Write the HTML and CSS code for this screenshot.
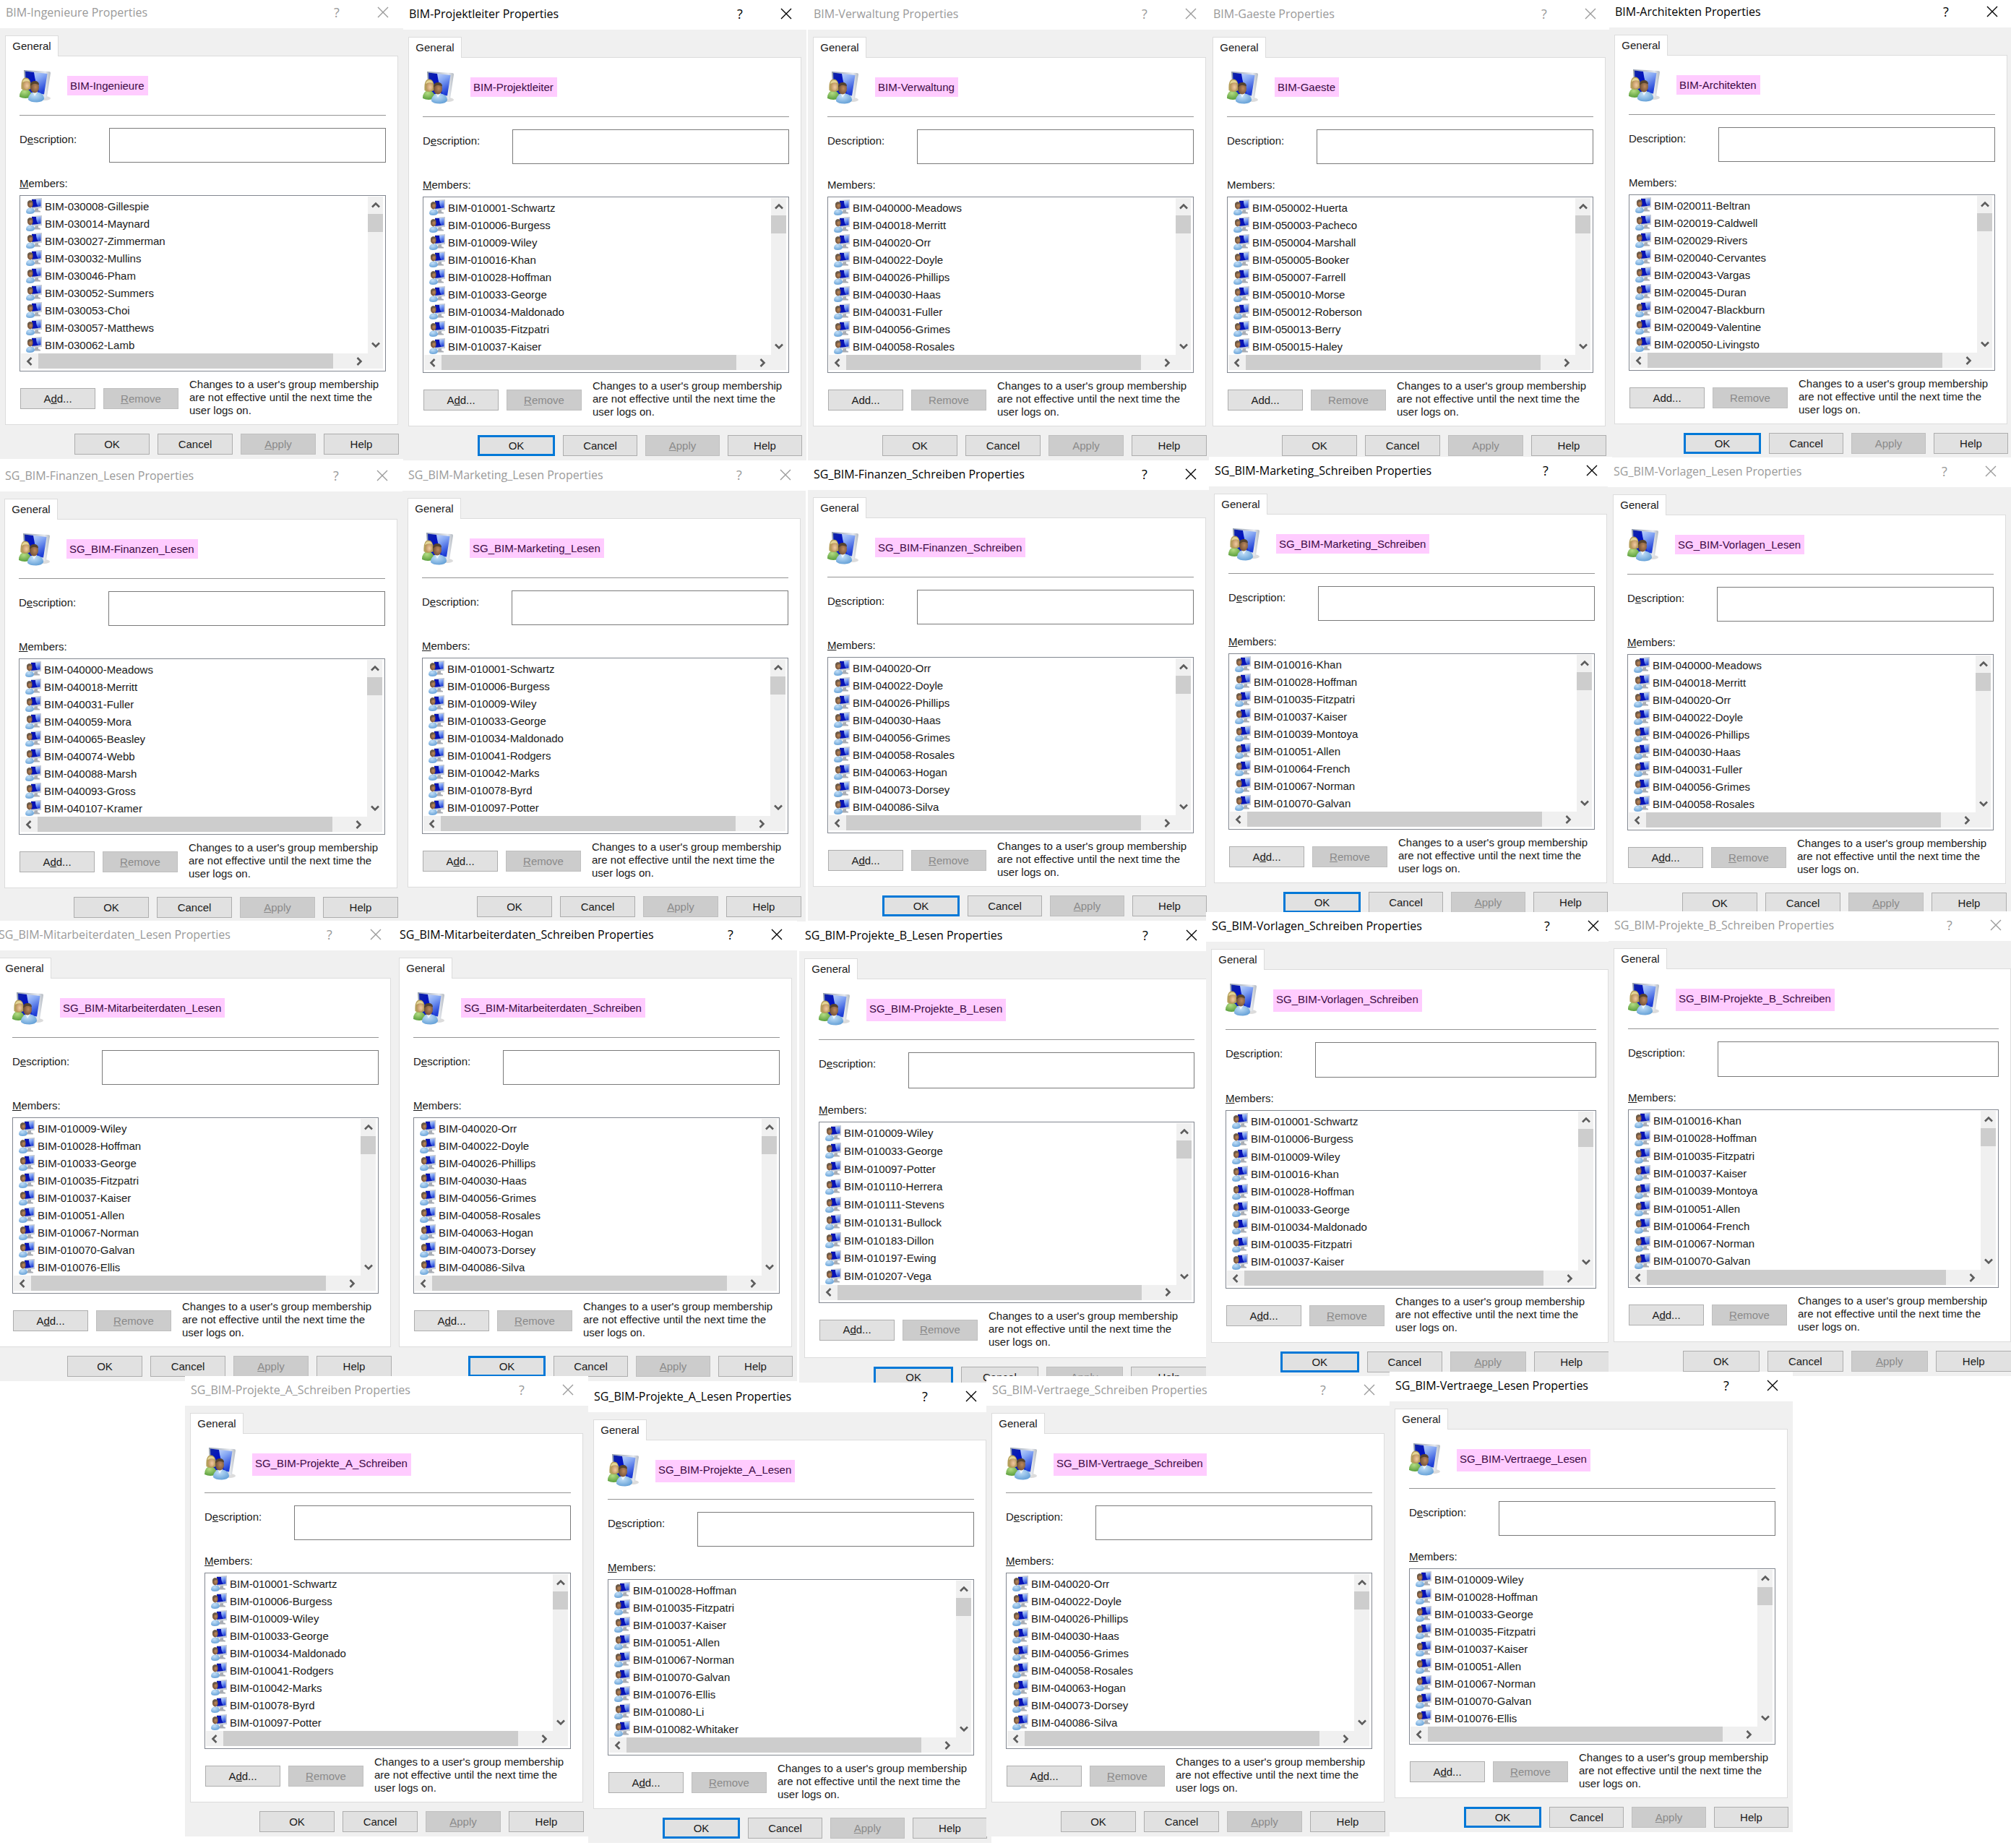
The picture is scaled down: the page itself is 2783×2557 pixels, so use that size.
FILE: index.html
```html
<!DOCTYPE html>
<html lang="en">
<head>
  <meta charset="utf-8">
  <title>Group Properties</title>
  <link rel="stylesheet" href="styles.css">
</head>
<body>
  <svg class="sprites" aria-hidden="true">
    <defs>
      <linearGradient id="screen-light" x1="0" y1="0" x2="0.6" y2="1">
        <stop offset="0" stop-color="#e4eeff"/>
        <stop offset="0.5" stop-color="#86a8f4"/>
        <stop offset="1" stop-color="#1f3fd6"/>
      </linearGradient>
      <linearGradient id="screen-dark" x1="0" y1="0" x2="1" y2="1">
        <stop offset="0" stop-color="#1226a4"/>
        <stop offset="0.5" stop-color="#0010c4"/>
        <stop offset="1" stop-color="#1a36d8"/>
      </linearGradient>
      <linearGradient id="bezel" x1="0" y1="0" x2="1" y2="0">
        <stop offset="0" stop-color="#8d99ab"/>
        <stop offset="0.8" stop-color="#e6e9ee"/>
        <stop offset="1" stop-color="#b4bac2"/>
      </linearGradient>
      <radialGradient id="shirt-blue" cx="0.4" cy="0.3" r="0.8">
        <stop offset="0" stop-color="#c3e0f8"/>
        <stop offset="1" stop-color="#5b9ad4"/>
      </radialGradient>
      <radialGradient id="shirt-green" cx="0.4" cy="0.3" r="0.8">
        <stop offset="0" stop-color="#b4dc84"/>
        <stop offset="1" stop-color="#4c9631"/>
      </radialGradient>
      <radialGradient id="face-dark" cx="0.6" cy="0.5" r="0.7">
        <stop offset="0" stop-color="#bd8a5e"/>
        <stop offset="1" stop-color="#5f432e"/>
      </radialGradient>
      <radialGradient id="face-light" cx="0.6" cy="0.6" r="0.7">
        <stop offset="0" stop-color="#f0c9a0"/>
        <stop offset="1" stop-color="#b58e55"/>
      </radialGradient>
    </defs>
    <symbol id="icon-group" viewBox="0 0 44 46">
      <ellipse cx="35" cy="40" rx="8" ry="3" fill="#dcdcdc"/>
      <path d="M6 1 L41 3 Q43 3 43 5 L38 38 Q37 40 35 39 L8 34 Z" fill="url(#bezel)"/>
      <path d="M8 2.500 L38.500 6 L34 34.500 L9 31 Z" fill="url(#screen-light)"/>
      <path d="M8 2.500 L20 4 Q22 20 29 33.700 L9 31 Z" fill="url(#screen-dark)"/>
      <path d="M0 38 Q0 28 8 27 Q17 28 17 38 Q8 42 0 38 Z" fill="url(#shirt-green)"/>
      <path d="M2.500 27 Q1.500 11 9 11.500 Q17 12 15.500 27 Q8 31 2.500 27 Z" fill="#b59e5a"/>
      <ellipse cx="9.500" cy="21.500" rx="4.500" ry="6" fill="url(#face-light)"/>
      <path d="M4 18 Q5 13 9 13 Q13 13 14 17 Q9 15 4 18 Z" fill="#e3d596"/>
      <path d="M12 42 Q12 32 22 31 Q34 32 34 41 Q32 45 24 45.500 Q15 45.500 12 42 Z" fill="url(#shirt-blue)"/>
      <path d="M18 31 L21 37 L25 31 Z" fill="#eef6fc"/>
      <ellipse cx="21" cy="24.500" rx="6" ry="8" fill="url(#face-dark)"/>
      <path d="M15 23 Q14.500 16 21 16 Q27 16 27 21.500 Q21 18.500 17.500 21 Z" fill="#55432f"/>
    </symbol>
    <symbol id="icon-user" viewBox="0 0 22 22">
      <path d="M13 14 H17 V17 L20 18 V19.500 H11 Z" fill="#a9adb4"/>
      <path d="M8 1 L22 0 V14 L8 15 Z" fill="#c5cbd4"/>
      <path d="M9 2 L20.500 1.500 V11.500 L9 12.500 Z" fill="url(#screen-light)"/>
      <path d="M8 2 H14 Q14 8 17 12 L8 12.800 Z" fill="#0712b4"/>
      <path d="M0 19.500 Q0 14 6 13.500 Q12 14 12 18.500 Q11 22 5 22 Q1 22 0 19.500 Z" fill="url(#shirt-blue)"/>
      <ellipse cx="5.800" cy="8.500" rx="3.800" ry="5" fill="url(#face-dark)"/>
      <path d="M2 8 Q1.500 3.200 6 3.200 Q9.500 3.200 9.500 6 Q6 5 3.500 7.500 Z" fill="#6b5a48"/>
    </symbol>
    <symbol id="icon-close" viewBox="0 0 16 16">
      <path d="M1 1 L15 15 M15 1 L1 15" fill="none" stroke="currentColor" stroke-width="1.400"/>
    </symbol>
    <symbol id="icon-chevron" viewBox="0 0 12 12">
      <path d="M1 8.500 L6 3.500 L11 8.500" fill="none" stroke="#5c5c5c" stroke-width="2.600"/>
    </symbol>
  </svg>

  <main class="desktop" id="desktop"></main>

  <script src="dialogs.js"></script>
</body>
</html>
```

FILE: styles.css
```css
* {
  box-sizing: border-box;
}

body {
  margin: 0;
  background: #fff;
  color: #1a1a1a;
  font-family: "Liberation Sans", Arial, sans-serif;
  font-size: 15px;
  line-height: 18px;
}

button,
input {
  font: inherit;
  color: inherit;
  border-radius: 0;
}

.sprites {
  position: absolute;
  width: 0;
  height: 0;
}

.desktop {
  position: relative;
  min-height: 100vh;
  overflow: hidden;
}

/* Window frame */

.dialog {
  position: absolute;
  display: flex;
  flex-direction: column;
  width: 558px;
  min-height: 637px;
  background: #f0f0f0;
}

.dialog--medium {
  width: 564px;
  min-height: 643px;
}

.dialog--large {
  width: 571px;
  min-height: 651px;
}

.titlebar {
  display: flex;
  align-items: center;
  height: 41px;
  padding: 0 0 4px 8px;
  background: #fff;
  color: #000;
  font-family: "Open Sans", "Noto Sans", sans-serif;
}

.dialog--inactive .titlebar {
  color: #9a9a9a;
}

.titlebar__text {
  flex: 1;
  margin: 0;
  font-size: 16px;
  font-weight: 400;
  white-space: nowrap;
}

.titlebar__button {
  display: flex;
  align-items: center;
  justify-content: center;
  width: 56px;
  height: 32px;
  padding: 0;
  border: 0;
  background: none;
  font-size: 18px;
}

.titlebar__button--help {
  width: 72px;
}

.titlebar__button svg {
  width: 16px;
  height: 16px;
}

/* Tab and panel */

.tabs {
  display: flex;
  padding: 10px 7px 0;
}

.tab {
  width: 74px;
  height: 29px;
  margin-bottom: -1px;
  padding: 0;
  border: 1px solid #dcdcdc;
  border-bottom: 0;
  background: #fff;
  z-index: 1;
}

.panel {
  flex: 1;
  display: flex;
  flex-direction: column;
  margin: 0 7px;
  padding: 0 16px 0 19px;
  border: 1px solid #dcdcdc;
  background: #fff;
}

.group {
  flex: 82 0 82px;
  display: flex;
  align-items: flex-start;
  gap: 22px;
  padding-top: 18px;
  border-bottom: 1px solid #949494;
}

.group__icon {
  width: 44px;
  height: 46px;
}

.group__name {
  margin-top: 9px;
  padding: 0 5px 0 4px;
  background: #fcf;
  color: #3d0a45;
  line-height: 27px;
}

.group__name--tall {
  padding-bottom: 4px;
}

.description {
  flex: 65 0 65px;
  display: flex;
  padding-top: 17px;
}

.description__label {
  width: 124px;
  line-height: 32px;
}

.description__input {
  flex: 1;
  min-width: 0;
  border: 1px solid #7a7a7a;
  background: #fff;
}

.members-label {
  flex: 45 0 45px;
  display: flex;
  align-items: flex-end;
  margin: 0;
  font-size: 15px;
  font-weight: 400;
  line-height: 32px;
}

/* Member list */

.listbox {
  flex: 244 0 244px;
  display: grid;
  grid-template: 1fr 21px / 1fr 21px;
  padding: 1px 3px 3px 1px;
  border: 1px solid #828790;
}

.members {
  display: grid;
  grid-auto-rows: 1fr;
  margin: 0;
  padding: 1px 0 0 7px;
  list-style: none;
}

.member {
  display: flex;
  align-items: center;
  gap: 4px;
  white-space: nowrap;
}

.member__name {
  padding-top: 1px;
}

.member__icon {
  flex: none;
  width: 22px;
  height: 22px;
}

.scrollbar {
  display: flex;
  align-items: center;
  background: #f0f0f0;
}

.scrollbar--vertical {
  flex-direction: column;
}

.scrollbar--horizontal {
  grid-column: span 2;
  padding-right: 21px;
}

.scrollbar__arrow {
  flex: none;
  display: flex;
  align-items: center;
  justify-content: center;
  width: 24px;
  height: 24px;
}

.scrollbar__arrow svg {
  width: 12px;
  height: 12px;
}

.scrollbar__arrow--down svg {
  transform: rotate(180deg);
}

.scrollbar__arrow--left svg {
  transform: rotate(270deg);
}

.scrollbar__arrow--right svg {
  transform: rotate(90deg);
}

.scrollbar__thumb {
  background: #cdcdcd;
}

.scrollbar--vertical .scrollbar__thumb {
  width: 21px;
  height: 25px;
  margin-bottom: auto;
}

.scrollbar--horizontal .scrollbar__thumb {
  flex: 1;
  height: 21px;
  margin-right: 24px;
}

/* Buttons */

.button {
  height: 29px;
  padding: 0;
  border: 1px solid #adadad;
  background: #e1e1e1;
}

.button:disabled {
  border-color: #bfbfbf;
  background: #ccc;
  color: #8a8a8a;
}

.button--default {
  border: 3px solid #0078d7;
}

.actions {
  flex: 73 0 73px;
  display: flex;
  gap: 11px;
  padding: 9px 0 0 1px;
}

.actions .button {
  width: 104px;
  margin-top: 14px;
}

.actions__note {
  flex: 1;
  margin: 0 0 0 4px;
}

.footer {
  display: flex;
  gap: 11px;
  padding: 12px 6px 6px 103px;
}

.footer .button {
  flex: 1;
}
```

FILE: dialogs.js
```js
// Every property sheet on the desktop: group name, window position and its first members.
const dialogs = [
  { name: "BIM-Ingenieure", x: 0, y: -2, members: ["030008-Gillespie", "030014-Maynard", "030027-Zimmerman", "030032-Mullins", "030046-Pham", "030052-Summers", "030053-Choi", "030057-Matthews", "030062-Lamb"] },
  { name: "BIM-Projektleiter", x: 558, y: 0, active: true, members: ["010001-Schwartz", "010006-Burgess", "010009-Wiley", "010016-Khan", "010028-Hoffman", "010033-George", "010034-Maldonado", "010035-Fitzpatri", "010037-Kaiser"] },
  { name: "BIM-Verwaltung", x: 1118, y: 0, plain: true, members: ["040000-Meadows", "040018-Merritt", "040020-Orr", "040022-Doyle", "040026-Phillips", "040030-Haas", "040031-Fuller", "040056-Grimes", "040058-Rosales"] },
  { name: "BIM-Gaeste", x: 1671, y: 0, plain: true, members: ["050002-Huerta", "050003-Pacheco", "050004-Marshall", "050005-Booker", "050007-Farrell", "050010-Morse", "050012-Roberson", "050013-Berry", "050015-Haley"] },
  { name: "BIM-Architekten", x: 2227, y: -3, active: true, plain: true, members: ["020011-Beltran", "020019-Caldwell", "020029-Rivers", "020040-Cervantes", "020043-Vargas", "020045-Duran", "020047-Blackburn", "020049-Valentine", "020050-Livingsto"] },

  { name: "SG_BIM-Finanzen_Lesen", x: -1, y: 639, members: ["040000-Meadows", "040018-Merritt", "040031-Fuller", "040059-Mora", "040065-Beasley", "040074-Webb", "040088-Marsh", "040093-Gross", "040107-Kramer"] },
  { name: "SG_BIM-Marketing_Lesen", x: 557, y: 638, members: ["010001-Schwartz", "010006-Burgess", "010009-Wiley", "010033-George", "010034-Maldonado", "010041-Rodgers", "010042-Marks", "010078-Byrd", "010097-Potter"] },
  { name: "SG_BIM-Finanzen_Schreiben", x: 1118, y: 637, active: true, members: ["040020-Orr", "040022-Doyle", "040026-Phillips", "040030-Haas", "040056-Grimes", "040058-Rosales", "040063-Hogan", "040073-Dorsey", "040086-Silva"] },
  { name: "SG_BIM-Marketing_Schreiben", x: 1673, y: 632, active: true, members: ["010016-Khan", "010028-Hoffman", "010035-Fitzpatri", "010037-Kaiser", "010039-Montoya", "010051-Allen", "010064-French", "010067-Norman", "010070-Galvan"] },
  { name: "SG_BIM-Vorlagen_Lesen", x: 2225, y: 633, members: ["040000-Meadows", "040018-Merritt", "040020-Orr", "040022-Doyle", "040026-Phillips", "040030-Haas", "040031-Fuller", "040056-Grimes", "040058-Rosales"] },

  { name: "SG_BIM-Mitarbeiterdaten_Lesen", x: -10, y: 1274, members: ["010009-Wiley", "010028-Hoffman", "010033-George", "010035-Fitzpatri", "010037-Kaiser", "010051-Allen", "010067-Norman", "010070-Galvan", "010076-Ellis"] },
  { name: "SG_BIM-Mitarbeiterdaten_Schreiben", x: 545, y: 1274, active: true, members: ["040020-Orr", "040022-Doyle", "040026-Phillips", "040030-Haas", "040056-Grimes", "040058-Rosales", "040063-Hogan", "040073-Dorsey", "040086-Silva"] },
  { name: "SG_BIM-Projekte_B_Lesen", x: 1106, y: 1275, active: true, tall: true, size: "large", members: ["010009-Wiley", "010033-George", "010097-Potter", "010110-Herrera", "010111-Stevens", "010131-Bullock", "010183-Dillon", "010197-Ewing", "010207-Vega"] },
  { name: "SG_BIM-Vorlagen_Schreiben", x: 1669, y: 1262, active: true, tall: true, size: "medium", members: ["010001-Schwartz", "010006-Burgess", "010009-Wiley", "010016-Khan", "010028-Hoffman", "010033-George", "010034-Maldonado", "010035-Fitzpatri", "010037-Kaiser"] },
  { name: "SG_BIM-Projekte_B_Schreiben", x: 2226, y: 1261, tall: true, size: "medium", members: ["010016-Khan", "010028-Hoffman", "010035-Fitzpatri", "010037-Kaiser", "010039-Montoya", "010051-Allen", "010064-French", "010067-Norman", "010070-Galvan"] },

  { name: "SG_BIM-Projekte_A_Schreiben", x: 256, y: 1904, tall: true, members: ["010001-Schwartz", "010006-Burgess", "010009-Wiley", "010033-George", "010034-Maldonado", "010041-Rodgers", "010042-Marks", "010078-Byrd", "010097-Potter"] },
  { name: "SG_BIM-Projekte_A_Lesen", x: 814, y: 1913, active: true, tall: true, members: ["010028-Hoffman", "010035-Fitzpatri", "010037-Kaiser", "010051-Allen", "010067-Norman", "010070-Galvan", "010076-Ellis", "010080-Li", "010082-Whitaker"] },
  { name: "SG_BIM-Vertraege_Schreiben", x: 1365, y: 1904, tall: true, members: ["040020-Orr", "040022-Doyle", "040026-Phillips", "040030-Haas", "040056-Grimes", "040058-Rosales", "040063-Hogan", "040073-Dorsey", "040086-Silva"] },
  { name: "SG_BIM-Vertraege_Lesen", x: 1923, y: 1898, active: true, tall: true, members: ["010009-Wiley", "010028-Hoffman", "010033-George", "010035-Fitzpatri", "010037-Kaiser", "010051-Allen", "010067-Norman", "010070-Galvan", "010076-Ellis"] }
];

const icon = (id, className = "") =>
  `<svg class="${className}" aria-hidden="true"><use href="#icon-${id}"></use></svg>`;

const arrow = (direction) =>
  `<span class="scrollbar__arrow scrollbar__arrow--${direction}">${icon("chevron")}</span>`;

function renderDialog(dialog, index) {
  // Underlines the access key, unless the sheet hides its access keys.
  const key = (letter) => (dialog.plain ? letter : `<u>${letter}</u>`);
  const classes = ["dialog"];
  if (!dialog.active) classes.push("dialog--inactive");
  if (dialog.size) classes.push(`dialog--${dialog.size}`);

  return `
    <section class="${classes.join(" ")}" style="left: ${dialog.x}px; top: ${dialog.y}px" aria-labelledby="title-${index}">
      <header class="titlebar">
        <h2 class="titlebar__text" id="title-${index}">${dialog.name} Properties</h2>
        <button class="titlebar__button titlebar__button--help" type="button">?</button>
        <button class="titlebar__button" type="button" aria-label="Close">${icon("close")}</button>
      </header>
      <div class="tabs" role="tablist">
        <button class="tab" type="button" role="tab" aria-selected="true">General</button>
      </div>
      <div class="panel" role="tabpanel">
        <div class="group">
          ${icon("group", "group__icon")}
          <span class="group__name${dialog.tall ? " group__name--tall" : ""}">${dialog.name}</span>
        </div>
        <div class="description">
          <label class="description__label" for="description-${index}">D${key("e")}scription:</label>
          <input class="description__input" id="description-${index}" type="text">
        </div>
        <h3 class="members-label" id="members-${index}">${key("M")}embers:</h3>
        <div class="listbox">
          <ul class="members" aria-labelledby="members-${index}">
            ${dialog.members.map((m) => `<li class="member">${icon("user", "member__icon")}<span class="member__name">BIM-${m}</span></li>`).join("")}
          </ul>
          <div class="scrollbar scrollbar--vertical">${arrow("up")}<span class="scrollbar__thumb"></span>${arrow("down")}</div>
          <div class="scrollbar scrollbar--horizontal">${arrow("left")}<span class="scrollbar__thumb"></span>${arrow("right")}</div>
        </div>
        <div class="actions">
          <button class="button" type="button">A${key("d")}d...</button>
          <button class="button" type="button" disabled>${key("R")}emove</button>
          <p class="actions__note">Changes to a user's group membership are not effective until the next time the user logs on.</p>
        </div>
      </div>
      <footer class="footer">
        <button class="button${dialog.active ? " button--default" : ""}" type="button">OK</button>
        <button class="button" type="button">Cancel</button>
        <button class="button" type="button" disabled>${key("A")}pply</button>
        <button class="button" type="button">Help</button>
      </footer>
    </section>`;
}

document.getElementById("desktop").innerHTML = dialogs.map(renderDialog).join("");
```
